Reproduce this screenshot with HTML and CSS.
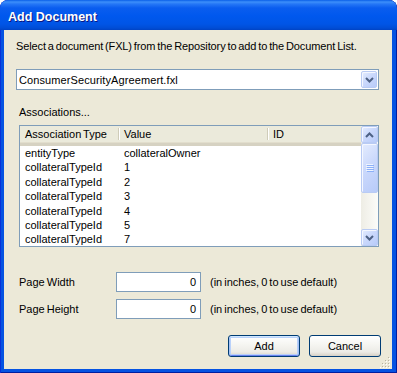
FILE: index.html
```html
<!DOCTYPE html>
<html>
<head>
<meta charset="utf-8">
<title>Add Document</title>
<link rel="stylesheet" href="styles.css">
</head>
<body>
<div class="window">
  <div class="titlebar"><span class="title">Add Document</span></div>
  <div class="client">
    <p class="prompt">Select a document (FXL) from the Repository to add to the Document List.</p>
    <div class="combo">
      <span class="combo-text">ConsumerSecurityAgreemert.fxl</span>
      <span class="xp-btn combo-btn"><svg width="9" height="6" viewBox="0 0 9 6"><path d="M1 1 L4.5 4.5 L8 1" fill="none" stroke="#4D6185" stroke-width="2"/></svg></span>
    </div>
    <p class="section-label">Associations...</p>
    <div class="listview">
      <div class="lv-main">
        <div class="lv-header">
          <div class="hcell h1">Association Type</div>
          <div class="hsep"></div>
          <div class="hcell h2">Value</div>
          <div class="hsep"></div>
          <div class="hcell h3">ID</div>
        </div>
        <div class="lv-rows">
          <div class="row"><span class="rc1">entityType</span><span class="rc2">collateralOwner</span></div>
          <div class="row"><span class="rc1">collateralTypeId</span><span class="rc2">1</span></div>
          <div class="row"><span class="rc1">collateralTypeId</span><span class="rc2">2</span></div>
          <div class="row"><span class="rc1">collateralTypeId</span><span class="rc2">3</span></div>
          <div class="row"><span class="rc1">collateralTypeId</span><span class="rc2">4</span></div>
          <div class="row"><span class="rc1">collateralTypeId</span><span class="rc2">5</span></div>
          <div class="row"><span class="rc1">collateralTypeId</span><span class="rc2">7</span></div>
        </div>
      </div>
      <div class="scrollbar">
        <div class="xp-btn sb-btn"><svg width="9" height="6" viewBox="0 0 9 6"><path d="M1 5 L4.5 1.5 L8 5" fill="none" stroke="#4D6185" stroke-width="2"/></svg></div>
        <div class="xp-btn sb-thumb">
          <svg width="8" height="8" viewBox="0 0 8 8">
            <path d="M0 0.5H7M0 2.5H7M0 4.5H7M0 6.5H7" stroke="#EEF4FE" stroke-width="1"/>
            <path d="M1 1.5H8M1 3.5H8M1 5.5H8M1 7.5H8" stroke="#8CB0F8" stroke-width="1"/>
          </svg>
        </div>
        <div class="sb-track"></div>
        <div class="xp-btn sb-btn"><svg width="9" height="6" viewBox="0 0 9 6"><path d="M1 1 L4.5 4.5 L8 1" fill="none" stroke="#4D6185" stroke-width="2"/></svg></div>
      </div>
    </div>
    <div class="field-row first">
      <span class="field-label">Page Width</span>
      <span class="textbox">0</span>
      <span class="hint">(in inches, 0 to use default)</span>
    </div>
    <div class="field-row">
      <span class="field-label">Page Height</span>
      <span class="textbox">0</span>
      <span class="hint">(in inches, 0 to use default)</span>
    </div>
    <div class="buttons">
      <button class="btn default">Add</button>
      <button class="btn">Cancel</button>
    </div>
    <svg class="grip" width="11" height="11" viewBox="0 0 11 11">
      <g fill="#FFFFFF">
        <rect x="9" y="1" width="1" height="1"/>
        <rect x="6" y="4" width="1" height="1"/><rect x="9" y="4" width="1" height="1"/>
        <rect x="3" y="7" width="1" height="1"/><rect x="6" y="7" width="1" height="1"/><rect x="9" y="7" width="1" height="1"/>
        <rect x="0" y="10" width="1" height="1"/><rect x="3" y="10" width="1" height="1"/><rect x="6" y="10" width="1" height="1"/><rect x="9" y="10" width="1" height="1"/>
      </g>
      <g fill="#B8B4A2">
        <rect x="8" y="0" width="1" height="1"/>
        <rect x="5" y="3" width="1" height="1"/><rect x="8" y="3" width="1" height="1"/>
        <rect x="2" y="6" width="1" height="1"/><rect x="5" y="6" width="1" height="1"/><rect x="8" y="6" width="1" height="1"/>
        <rect x="2" y="9" width="1" height="1"/><rect x="5" y="9" width="1" height="1"/><rect x="8" y="9" width="1" height="1"/>
      </g>
    </svg>
  </div>
</div>
</body>
</html>
```
FILE: styles.css
```css
* { box-sizing: border-box; }
html, body { margin: 0; padding: 0; background: #ffffff; }
body {
  font-family: "Liberation Sans", Arial, sans-serif;
  font-size: 11px;
  word-spacing: -1px;
  color: #000;
}
.window {
  width: 397px;
  height: 373px;
  background: #0553E2;
  border-radius: 8px 8px 0 0;
  overflow: hidden;
  display: flex;
  flex-direction: column;
  box-shadow: inset 1px 0 0 #0831D9, inset -1px 0 0 #001EA0, inset 0 -1px 0 #001EA0;
}
.titlebar {
  height: 30px;
  flex: none;
  padding: 8px 0 0 8px;
  line-height: 18px;
  background: linear-gradient(to bottom, #0A5FE8 0, #3D8FFA 2px, #2577F6 4px, #0A5DEF 8px, #0058EE 16px, #0055E6 24px, #004DD6 28px, #0043C4 30px);
  border-radius: 8px 8px 0 0;
}
.title {
  font-family: "Liberation Sans", Arial, sans-serif;
  font-weight: bold;
  font-size: 12.5px;
  word-spacing: 0;
  color: #fff;
  text-shadow: 1px 1px 0 #0A1883;
}
.client {
  flex: 1;
  margin: 0 5px 4px 4px;
  background: #ECE9D8;
  padding: 9px 11px 0 12px;
  position: relative;
}
.prompt {
  margin: 0;
  line-height: 14px;
  white-space: nowrap;
  letter-spacing: -0.12px;
}
.combo {
  margin: 16px 2px 0 0;
  height: 21px;
  border: 1px solid #7F9DB9;
  background: #fff;
  display: flex;
  align-items: center;
}
.combo-text { padding-left: 2px; flex: 1; letter-spacing: 0.1px; }
.xp-btn {
  display: flex;
  align-items: center;
  justify-content: center;
  border: 1px solid #B9CBF4;
  border-radius: 2px;
  background: linear-gradient(135deg, #E4ECFE 0%, #CBD9FC 45%, #B8CBF9 100%);
  box-shadow: inset 1px 1px 0 #F4F7FF;
}
.combo-btn {
  width: 16px;
  height: 17px;
  margin-right: 1px;
}
.section-label {
  margin: 15px 0 0 3px;
  line-height: 14px;
}
.listview {
  margin: 6px 2px 0 3px;
  height: 122px;
  border: 1px solid #7F9DB9;
  background: #fff;
  display: flex;
  overflow: hidden;
}
.lv-main { flex: 1; overflow: hidden; }
.lv-header {
  height: 20px;
  display: flex;
  align-items: center;
  background: #EBEADB;
  border-bottom: 3px solid #D6D2C2;
  box-shadow: inset 0 -1px 0 #E2DECD;
  padding-bottom: 1px;
}
.hcell { white-space: nowrap; }
.h1 { width: 98px; padding-left: 5px; }
.h2 { width: 147px; padding-left: 4px; }
.h3 { flex: 1; padding-left: 4px; }
.hsep {
  width: 2px;
  height: 12px;
  border-left: 1px solid #CFCCB9;
  border-right: 1px solid #FFFFFF;
}
.row {
  display: flex;
  line-height: 14.4px;
  height: 14.4px;
  white-space: nowrap;
}
.rc1 { width: 99px; padding-left: 5px; }
.rc2 { padding-left: 5px; }
.scrollbar {
  width: 17px;
  flex: none;
  display: flex;
  flex-direction: column;
  background: linear-gradient(to right, #EEEDE5, #FCFCF9);
}
.sb-btn { height: 17px; flex: none; }
.sb-thumb { height: 50px; flex: none; }
.sb-track { flex: 1; }
.field-row {
  display: flex;
  align-items: center;
  height: 20px;
  margin: 7px 0 0 3px;
}
.field-row.first { margin-top: 25px; }
.field-label { width: 97px; }
.textbox {
  width: 85px;
  height: 20px;
  border: 1px solid #7F9DB9;
  background: #fff;
  text-align: right;
  padding-right: 4px;
  line-height: 18px;
}
.hint { margin-left: 9px; }
.buttons {
  display: flex;
  justify-content: flex-end;
  gap: 9px;
  margin-top: 16px;
}
.btn {
  width: 72px;
  height: 22px;
  border: 1px solid #003C74;
  border-radius: 3px;
  background: linear-gradient(to bottom, #FFFFFF 0%, #F5F5F1 45%, #ECEBE6 80%, #D6D0C5 100%);
  font-family: "Liberation Sans", Arial, sans-serif;
  font-size: 11px;
  color: #000;
  padding: 0;
}
.btn.default {
  box-shadow: inset 0 1px 0 #CEE7FF, inset 1px 0 0 #A5C2F4, inset -1px 0 0 #A5C2F4, inset 0 -1px 0 #6982EE, inset 0 0 0 2px #B9D1FA;
}
.grip {
  position: absolute;
  right: 1px;
  bottom: 1px;
}
```
